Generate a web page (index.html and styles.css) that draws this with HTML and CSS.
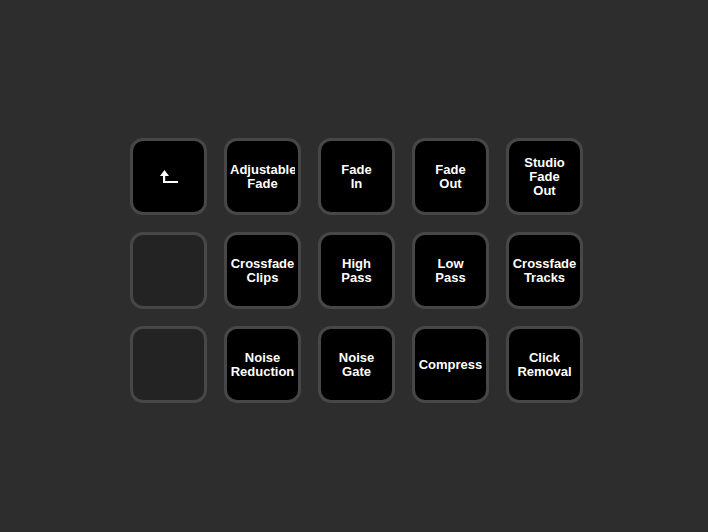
FILE: index.html
```html
<!DOCTYPE html>
<html>
<head>
<meta charset="utf-8">
<link rel="stylesheet" href="styles.css">
</head>
<body>
<div class="grid">
  <div class="key"><svg class="icon" width="18" height="14" viewBox="0 0 18 14"><polygon points="4.5,0 9,6 0,6" fill="#fff"/><rect x="3" y="5" width="2.2" height="8" fill="#fff"/><rect x="3" y="11" width="15" height="2" fill="#fff"/></svg></div>
  <div class="key"><span class="label"><span class="w">Adjustable</span><span class="w">Fade</span></span></div>
  <div class="key"><span class="label"><span class="w">Fade</span><span class="w">In</span></span></div>
  <div class="key"><span class="label"><span class="w">Fade</span><span class="w">Out</span></span></div>
  <div class="key"><span class="label"><span class="w">Studio</span><span class="w">Fade</span><span class="w">Out</span></span></div>
  <div class="key empty"></div>
  <div class="key"><span class="label"><span class="w">Crossfade</span><span class="w">Clips</span></span></div>
  <div class="key"><span class="label"><span class="w">High</span><span class="w">Pass</span></span></div>
  <div class="key"><span class="label"><span class="w">Low</span><span class="w">Pass</span></span></div>
  <div class="key"><span class="label"><span class="w">Crossfade</span><span class="w">Tracks</span></span></div>
  <div class="key empty"></div>
  <div class="key"><span class="label"><span class="w">Noise</span><span class="w">Reduction</span></span></div>
  <div class="key"><span class="label"><span class="w">Noise</span><span class="w">Gate</span></span></div>
  <div class="key"><span class="label"><span class="w">Compress</span></span></div>
  <div class="key"><span class="label"><span class="w">Click</span><span class="w">Removal</span></span></div>
</div>
</body>
</html>
```
FILE: styles.css
```css
html, body {
  margin: 0;
  padding: 0;
  background: #2d2d2d;
  width: 708px;
  height: 532px;
  overflow: hidden;
}
body {
  padding: 138px 0 0 130px;
  box-sizing: border-box;
  font-family: "Liberation Sans", Arial, sans-serif;
}
.grid {
  display: grid;
  grid-template-columns: repeat(5, 77px);
  grid-auto-rows: 77px;
  gap: 17px;
}
.key {
  box-sizing: border-box;
  width: 77px;
  height: 77px;
  border: 3px solid #474747;
  border-radius: 13px;
  background: #000;
  padding: 0 3px;
  display: flex;
  align-items: center;
  justify-content: center;
  overflow: hidden;
}
.key.empty {
  background: #232323;
}
.label {
  display: block;
  width: 100%;
  overflow: hidden;
  color: #fff;
  font-weight: bold;
  font-size: 13px;
  line-height: 14px;
  text-align: center;
}
.w {
  display: block;
  white-space: nowrap;
}
.icon {
  display: block;
  margin-left: 1px;
}
```
